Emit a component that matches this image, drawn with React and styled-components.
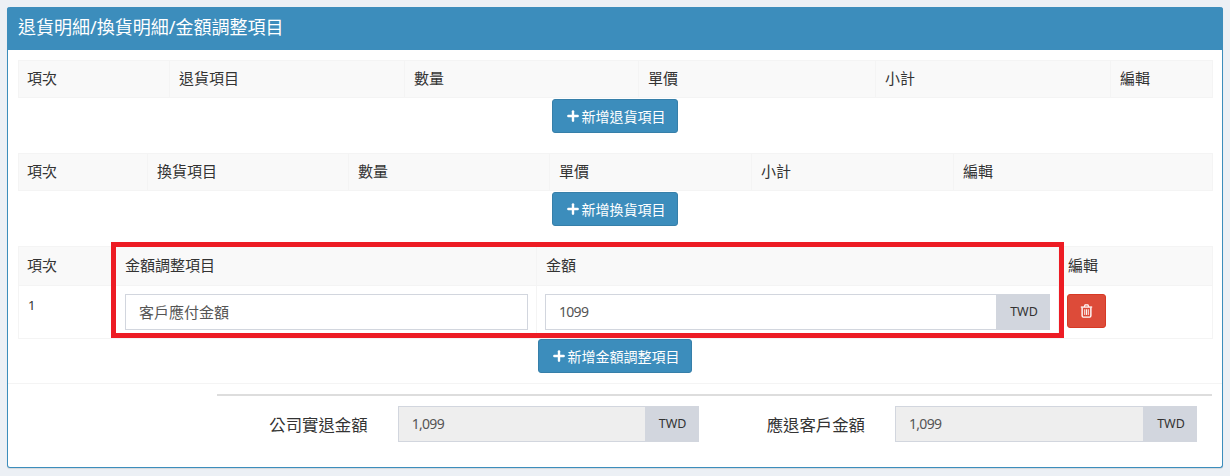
import React from 'react';
import styled, { createGlobalStyle } from 'styled-components';
import { Plus } from 'lucide-react';

const Global = createGlobalStyle`
  html, body { margin: 0; padding: 0; background: #ecf0f5; }
  body {
    font-family: "Noto Sans", "Noto Sans CJK TC", sans-serif;
    font-size: 14px;
    color: #333;
  }
  * { box-sizing: border-box; }
`;

const Page = styled.div`
  width: 1230px;
  height: 476px;
  padding: 7px 7px 8px 7px;
`;

const Panel = styled.section`
  height: 461px;
  background: #fff;
  border: 1px solid #3c8dbc;
  border-top: 0;
  border-radius: 3px;
  box-shadow: 0 1px 1px rgba(0, 0, 0, 0.1);
`;

const PanelHeading = styled.h3`
  margin: 0 -1px;
  height: 43px;
  padding: 0 11px;
  background: #3c8dbc;
  border-radius: 3px 3px 0 0;
  color: #fff;
  font-size: 18px;
  font-weight: 400;
  line-height: 41px;
`;

const PanelBody = styled.div`
  padding: 10px 10px 0 10px;
`;

const TableBlock = styled.div`
  position: relative;
  margin-top: ${(p) => p.$top || 0}px;
`;

const Table = styled.table`
  width: 1194px;
  table-layout: fixed;
  border-collapse: collapse;
  border: 1px solid #f4f4f4;
`;

const Th = styled.th`
  height: ${(p) => p.$height || 37}px;
  padding: 0 10px 4px 9px;
  background: #f9f9f9;
  border-left: 1px solid #f4f4f4;
  font-weight: 400;
  font-size: 15px;
  text-align: left;
  color: #333;

  &:first-child {
    padding-left: 8px;
  }
`;

const Td = styled.td`
  height: 53px;
  padding: 8px 8px 7px ${(p) => p.$left || 9}px;
  border-top: 1px solid #f4f4f4;
  border-left: 1px solid #f4f4f4;
  vertical-align: top;
`;

const RowNumber = styled.span`
  display: block;
  color: #333;
  font-size: 13px;
  padding-top: 2px;
`;

const ButtonRow = styled.div`
  display: flex;
  justify-content: center;
  margin-top: ${(p) => p.$top || 0}px;
`;

const AddButton = styled.button`
  display: flex;
  align-items: center;
  justify-content: center;
  gap: 1px;
  height: 34px;
  width: ${(p) => p.$width}px;
  padding: 0;
  background: #3c8dbc;
  border: 1px solid #367fa9;
  border-radius: 3px;
  color: #fff;
  font: inherit;
`;

const TextInput = styled.div`
  flex: 1;
  height: 36px;
  padding: 0 13px;
  background: ${(p) => (p.$disabled ? '#eee' : '#fff')};
  border: 1px solid #d2d6de;
  color: #555;
  font-size: ${(p) => p.$size || 14}px;
  letter-spacing: ${(p) => (p.$size ? 0 : -0.7)}px;
  line-height: 34px;
`;

const InputGroup = styled.div`
  display: flex;
  width: ${(p) => p.$width || 'auto'};
`;

const Addon = styled.span`
  flex: none;
  width: 53px;
  height: 36px;
  padding-left: 1px;
  background: #d2d6de;
  color: #333;
  font-size: 12.5px;
  line-height: 36px;
  text-align: center;
`;

const TrashButton = styled.button`
  display: flex;
  align-items: center;
  justify-content: center;
  width: 39px;
  height: 34px;
  padding: 0;
  background: #dd4b39;
  border: 1px solid #d73925;
  border-radius: 3px;
`;

const Highlight = styled.div`
  position: absolute;
  left: 93px;
  top: -4px;
  width: 953px;
  height: 96px;
  border: 5px solid #ed1c24;
  pointer-events: none;
`;

const Divider = styled.div`
  height: 1px;
  margin-top: 10px;
  background: #f4f4f4;
`;

const Totals = styled.div`
  margin: 10px 10px 0 209px;
  padding-top: 10px;
  border-top: 2px solid #ddd;
  display: flex;
  justify-content: flex-end;
  padding-right: 15px;
`;

const TotalField = styled.div`
  display: flex;
  align-items: center;
  margin-left: ${(p) => p.$left || 0}px;
`;

const TotalLabel = styled.span`
  margin-right: 30px;
  font-size: 16.4px;
  color: #333;
`;

const TrashIcon = () => (
  <svg width="13" height="14" viewBox="0 0 14 16" fill="none" stroke="#fff">
    <path d="M0.5 3.5h13" strokeWidth="1.5" />
    <path d="M4.5 3.2 5.4 1h3.2l.9 2.2" strokeWidth="1.4" />
    <path d="M2 4v9.5c0 .9.6 1.5 1.4 1.5h7.2c.8 0 1.4-.6 1.4-1.5V4" strokeWidth="1.6" />
    <path d="M5 6v6.5M7 6v6.5M9 6v6.5" strokeWidth="1.1" />
  </svg>
);

const ItemTable = ({ widths, headers }) => (
  <Table>
    <colgroup>
      {widths.map((w, i) => <col key={i} style={{ width: w }} />)}
    </colgroup>
    <thead>
      <tr>
        {headers.map((h) => <Th key={h}>{h}</Th>)}
      </tr>
    </thead>
  </Table>
);

const Add = ({ width, children }) => (
  <AddButton $width={width}>
    <Plus size={16} strokeWidth={3.6} />
    {children}
  </AddButton>
);

export default function App() {
  return (
    <Page>
      <Global />
      <Panel>
        <PanelHeading>退貨明細/換貨明細/金額調整項目</PanelHeading>
        <PanelBody>
          <ItemTable
            widths={[151, 235, 234, 237, 235, 102]}
            headers={['項次', '退貨項目', '數量', '單價', '小計', '編輯']}
          />
          <ButtonRow $top={1}>
            <Add width={126}>新增退貨項目</Add>
          </ButtonRow>

          <TableBlock $top={20}>
            <ItemTable
              widths={[129, 201, 201, 202, 202, 259]}
              headers={['項次', '換貨項目', '數量', '單價', '小計', '編輯']}
            />
          </TableBlock>
          <ButtonRow $top={1}>
            <Add width={126}>新增換貨項目</Add>
          </ButtonRow>

          <TableBlock $top={20}>
            <Table>
              <colgroup>
                <col style={{ width: 97 }} />
                <col style={{ width: 421 }} />
                <col style={{ width: 522 }} />
                <col style={{ width: 154 }} />
              </colgroup>
              <thead>
                <tr>
                  <Th $height={39}>項次</Th>
                  <Th $height={39}>金額調整項目</Th>
                  <Th $height={39}>金額</Th>
                  <Th $height={39}>編輯</Th>
                </tr>
              </thead>
              <tbody>
                <tr>
                  <Td><RowNumber>1</RowNumber></Td>
                  <Td><InputGroup><TextInput $size={15}>客戶應付金額</TextInput></InputGroup></Td>
                  <Td $left={8}>
                    <InputGroup>
                      <TextInput>1099</TextInput>
                      <Addon>TWD</Addon>
                    </InputGroup>
                  </Td>
                  <Td $left={8}><TrashButton><TrashIcon /></TrashButton></Td>
                </tr>
              </tbody>
            </Table>
            <Highlight />
          </TableBlock>
          <ButtonRow>
            <Add width={154}>新增金額調整項目</Add>
          </ButtonRow>
        </PanelBody>
        <Divider />
        <Totals>
          <TotalField>
            <TotalLabel>公司實退金額</TotalLabel>
            <InputGroup $width="301px">
              <TextInput $disabled>1,099</TextInput>
              <Addon>TWD</Addon>
            </InputGroup>
          </TotalField>
          <TotalField $left={68}>
            <TotalLabel>應退客戶金額</TotalLabel>
            <InputGroup $width="302px">
              <TextInput $disabled>1,099</TextInput>
              <Addon>TWD</Addon>
            </InputGroup>
          </TotalField>
        </Totals>
      </Panel>
    </Page>
  );
}
